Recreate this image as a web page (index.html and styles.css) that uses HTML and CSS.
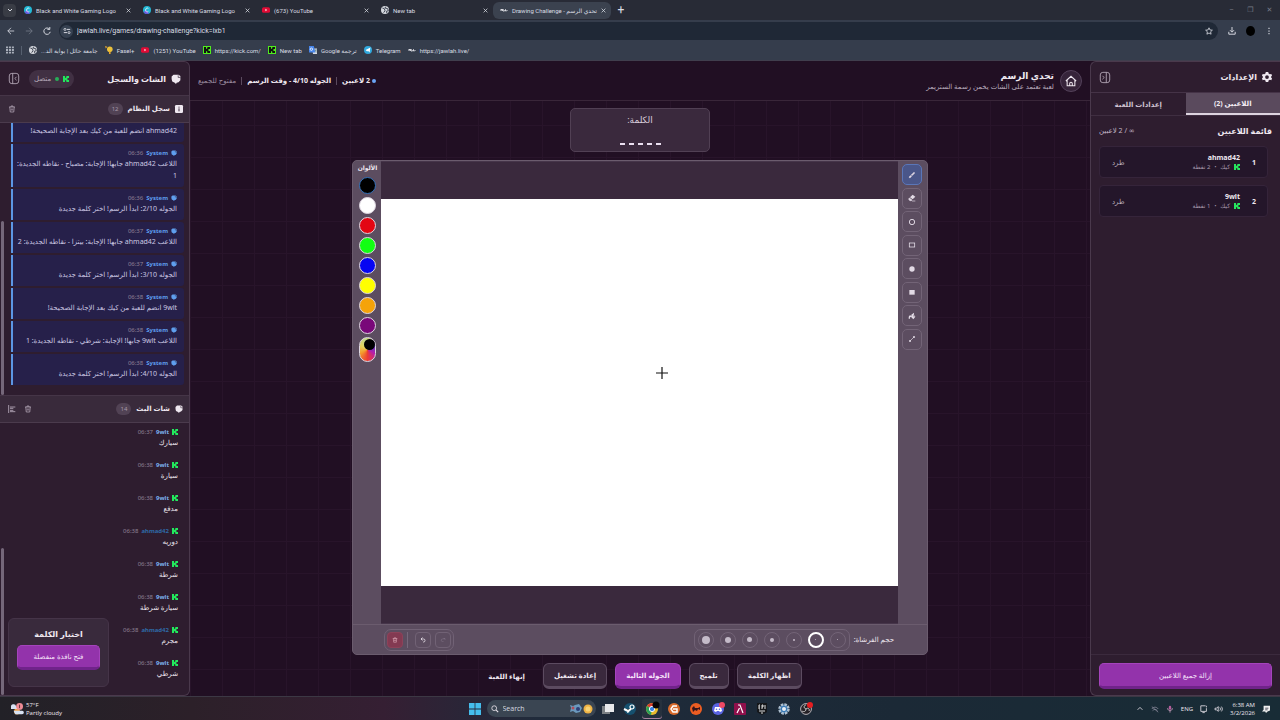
FILE: index.html
```html
<!DOCTYPE html>
<html lang="ar">
<head>
<meta charset="utf-8">
<title>تحدي الرسم - Drawing Challenge</title>
<link rel="stylesheet" href="styles.css">
</head>
<body>
<svg class="defs" aria-hidden="true">
  <symbol id="kick" viewBox="0 0 9 9"><g fill="currentColor"><rect width="3" height="9"/><rect x="2" y="3" width="3" height="3"/><rect x="4" y="2" width="3" height="2"/><rect x="4" y="5" width="3" height="2"/><rect x="5" width="4" height="3"/><rect x="5" y="6" width="4" height="3"/><rect x="4" y="3" width="2" height="3"/></g></symbol>
  <symbol id="chat" viewBox="0 0 16 16"><path fill="currentColor" d="M4 1h8l3 2v7l-3 3-3 1-1 2-2-2-4-2-1-4V4z"/><path d="M11.500 2v3.500H15" fill="none" stroke="#2c1c2e"/></symbol>
  <symbol id="trash" viewBox="0 0 16 16"><path d="M2 4h12M6 4V2h4v2M3.500 4l1 10h7l1-10M6.500 7v4M9.500 7v4" fill="none" stroke="currentColor" stroke-width="1.500"/></symbol>
  <symbol id="close" viewBox="0 0 8 8"><path d="M1 1l6 6M7 1L1 7" stroke="currentColor" stroke-width="1.200"/></symbol>
  <symbol id="panel" viewBox="0 0 14 14"><rect x="1.500" y="1" width="11" height="12" rx="3" fill="none" stroke="currentColor"/><path d="M8.500 1v12M4 5l2 2-2 2" fill="none" stroke="currentColor"/></symbol>
  <symbol id="globe" viewBox="0 0 12 12"><circle cx="6" cy="6" r="6" fill="#d5d8de"/><path d="M2 3l3 1 1 3-2 3M7 1l-1 2 4 1 1 3-3 1 1 3" fill="none" stroke="#353b49" stroke-width="1.400"/></symbol>
  <symbol id="canva" viewBox="0 0 12 12"><circle cx="6" cy="6" r="6" fill="#22b8d5"/><path d="M1 9a6 6 0 0 0 8 2L5 6z" fill="#6953dd"/><path d="M8 4C7 2 4 3 4 6s2 4 4 2" fill="none" stroke="#fff" stroke-width="1.200"/></symbol>
  <symbol id="yt" viewBox="0 0 14 12"><rect y="1" width="14" height="10" rx="3" fill="#e00b35"/><path d="M6 4l3 2-3 2z" fill="#fff"/></symbol>
  <symbol id="jawlah" viewBox="0 0 16 8"><path d="M0 4h2l2-2v4l2-4v4h3l2-3v3h2l2-2" fill="none" stroke="#e5e5eb" stroke-width="1.800"/></symbol>
</svg>

<div class="desktop">
  <header class="browser">
    <div class="tabs">
      <button class="tablist" aria-label="Search tabs"><svg viewBox="0 0 8 8"><path d="M2 3l2 2 2-2" fill="none" stroke="currentColor"/></svg></button>
      <div class="tab"><svg><use href="#canva"/></svg><span>Black and White Gaming Logo</span><button aria-label="Close"><svg><use href="#close"/></svg></button></div>
      <div class="tab"><svg><use href="#canva"/></svg><span>Black and White Gaming Logo</span><button aria-label="Close"><svg><use href="#close"/></svg></button></div>
      <div class="tab"><svg><use href="#yt"/></svg><span>(673) YouTube</span><button aria-label="Close"><svg><use href="#close"/></svg></button></div>
      <div class="tab"><svg><use href="#globe"/></svg><span>New tab</span><button aria-label="Close"><svg><use href="#close"/></svg></button></div>
      <div class="tab current"><svg><use href="#jawlah"/></svg><span dir="rtl">تحدي الرسم - Drawing Challenge</span><button aria-label="Close"><svg><use href="#close"/></svg></button></div>
      <button class="newtab" aria-label="New tab">+</button>
      <div class="winbtns"><button aria-label="Minimize">–</button><button aria-label="Restore">❐</button><button aria-label="Close window">✕</button></div>
    </div>
    <div class="toolbar">
      <button aria-label="Back"><svg viewBox="0 0 10 10"><path d="M9 5H1M5 1L1 5l4 4" fill="none" stroke="currentColor"/></svg></button>
      <button class="dim" aria-label="Forward"><svg viewBox="0 0 10 10"><path d="M1 5h8M5 1l4 4-4 4" fill="none" stroke="currentColor"/></svg></button>
      <button aria-label="Reload"><svg viewBox="0 0 10 10"><path d="M8 2.500A4 4 0 1 0 9 6M8.500 0v3h-3" fill="none" stroke="currentColor" stroke-width="1.200"/></svg></button>
      <div class="omnibox">
        <span class="site"><svg viewBox="0 0 10 10"><path d="M5 3h4M1 7h4" stroke="currentColor" stroke-width="1.200"/><circle cx="2.500" cy="3" r="1.300" fill="none" stroke="currentColor"/><circle cx="7.500" cy="7" r="1.300" fill="none" stroke="currentColor"/></svg></span>
        <input type="text" aria-label="Address" value="jawlah.live/games/drawing-challenge?kick=lxb1">
        <svg viewBox="0 0 10 10"><path d="M5 1l1.200 2.700 3 .3-2.200 2 .6 3L5 7.500 2.400 9 3 6 .8 4l3-.3z" fill="none" stroke="currentColor"/></svg>
      </div>
      <button aria-label="Downloads"><svg viewBox="0 0 10 10"><path d="M5 0v6M2.500 4L5 6.500 7.500 4M1 6v3h8V6" fill="none" stroke="currentColor" stroke-width="1.200"/></svg></button>
      <span class="avatar"></span>
      <button aria-label="Menu"><svg viewBox="0 0 10 10"><path d="M5 1v1.500M5 4.300v1.500M5 7.500V9" stroke="currentColor" stroke-width="1.400"/></svg></button>
    </div>
    <nav class="bookmarks">
      <svg class="apps" viewBox="0 0 9 9"><path d="M0 1.500h9M0 4.500h9M0 7.500h9" stroke="currentColor" stroke-width="2" stroke-dasharray="2.300 1"/></svg>
      <i></i>
      <a href="#"><svg><use href="#globe"/></svg><span dir="rtl">جامعة حائل | بوابة الد...</span></a>
      <a href="#"><svg viewBox="0 0 10 10"><circle cx="6" cy="4" r="3.500" fill="#ecc23b"/><path d="M5 7h2v3H5zM0 0l3 1-2 2z" fill="#e2a42e"/></svg>Fasel+</a>
      <a href="#"><svg><use href="#yt"/></svg>(1251) YouTube</a>
      <a href="#"><svg class="kicktile"><use href="#kick"/></svg>https://kick.com/</a>
      <a href="#"><svg class="kicktile"><use href="#kick"/></svg>New tab</a>
      <a href="#"><svg viewBox="0 0 10 10"><path d="M4 3h6v7H5z" fill="#d4d8e1"/><path d="M0 0h6l2 8H0z" fill="#4785e9"/><circle cx="3" cy="4" r="1.500" fill="none" stroke="#fff"/><path d="M7 5h3M8 5l1 3" stroke="#688"/></svg><span dir="rtl">ترجمة Google</span></a>
      <a href="#"><svg viewBox="0 0 10 10"><circle cx="5" cy="5" r="5" fill="#31a9de"/><path d="M2 5l6-3-1 6-2-2-1 1z" fill="#fff"/></svg>Telegram</a>
      <a href="#"><svg><use href="#jawlah"/></svg>https://jawlah.live/</a>
    </nav>
  </header>

  <div class="app" dir="rtl">
    <aside class="panel settings">
      <div class="panel-head">
        <svg viewBox="0 0 16 16"><path fill="currentColor" fill-rule="evenodd" d="M6 0h4l.5 2.500 2 1L15 3l1 3-2 2 2 2-1 3-2.500-.5-2 1L10 16H6l-.5-2.500-2-1L1 13l-1-3 2-2-2-2 1-3 2.500.5 2-1zM8 5a3 3 0 1 0 0 6 3 3 0 0 0 0-6z"/></svg>
        <h2>الإعدادات</h2>
        <button class="collapse" aria-label="طي الإعدادات"><svg><use href="#panel"/></svg></button>
      </div>
      <div class="switch"><button class="on">اللاعبين (2)</button><button>إعدادات اللعبة</button></div>
      <div class="players">
        <div class="players-head"><h3>قائمة اللاعبين</h3><span>∞ / 2 لاعبين</span></div>
        <div class="player"><b class="rank">1</b><div class="who"><b>ahmad42</b><small><svg><use href="#kick"/></svg>كيك<em>•</em>2 نقطة</small></div><button>طرد</button></div>
        <div class="player"><b class="rank">2</b><div class="who"><b>9wlt</b><small><svg><use href="#kick"/></svg>كيك<em>•</em>1 نقطة</small></div><button>طرد</button></div>
      </div>
      <div class="panel-foot"><button class="primary">إزالة جميع اللاعبين</button></div>
    </aside>

    <main class="game">
      <header class="game-head">
        <button class="home" aria-label="الرئيسية"><svg viewBox="0 0 14 14"><path d="M1 7l6-5.500L13 7M2.500 6v6.500h9V6M5.500 12.500V10a1.500 1.500 0 0 1 3 0v2.500" fill="none" stroke="currentColor" stroke-width="1.200"/></svg></button>
        <div class="title"><h1>تحدي الرسم</h1><p>لعبة تعتمد على الشات يخمن رسمة الستريمر</p></div>
        <div class="status"><b class="count">2 لاعبين</b><b>الجوله 4/10 - وقت الرسم</b><span>مفتوح للجميع</span></div>
      </header>
      <div class="stage">
        <div class="word"><span>الكلمة:</span><div class="blanks"><i></i><i></i><i></i><i></i><i></i></div></div>
        <section class="board">
          <div class="work">
            <div class="tools">
              <button class="on" aria-label="فرشاة"><svg viewBox="0 0 12 12"><path d="M5 6l4-4 1 1-4 4zM2 10c0-2 1-3 2-3l1 1c0 1-1 2-3 2z" fill="currentColor" stroke="currentColor"/></svg></button>
              <button aria-label="ممحاة"><svg viewBox="0 0 12 12"><path d="M7 1l4 3-4 4-4-3z" fill="currentColor"/><path d="M2 6l4 3-1 1H3L1 8zM6 10.500h5" fill="currentColor" stroke="currentColor"/></svg></button>
              <button aria-label="دائرة"><svg viewBox="0 0 12 12"><circle cx="6" cy="6" r="4" fill="none" stroke="currentColor" stroke-width="1.400"/></svg></button>
              <button aria-label="مستطيل"><svg viewBox="0 0 12 12"><rect x="2" y="3" width="8" height="6" fill="none" stroke="currentColor" stroke-width="1.200"/></svg></button>
              <button aria-label="دائرة ممتلئة"><svg viewBox="0 0 12 12"><circle cx="6" cy="6" r="4" fill="currentColor"/></svg></button>
              <button aria-label="مستطيل ممتلئ"><svg viewBox="0 0 12 12"><rect x="2" y="3" width="8" height="7" fill="currentColor"/></svg></button>
              <button aria-label="تعبئة"><svg viewBox="0 0 12 12"><path d="M5 4l4-3v3l2 3-3 4-3-3zM4 5C1 5 1 7 1 10h2c0-2 0-3 2-3" fill="currentColor"/><path d="M9 4v3" stroke="#5a4a5e"/></svg></button>
              <button aria-label="خط"><svg viewBox="0 0 12 12"><path d="M3 9l6-6" stroke="currentColor"/><circle cx="3" cy="9" r="1.500" fill="currentColor"/><circle cx="9" cy="3" r="1.500" fill="currentColor"/></svg></button>
            </div>
            <div class="canvas-area"><div class="canvas"><svg class="cursor" viewBox="0 0 12 12"><path d="M6 0v12M0 6h12" stroke="#111" stroke-width="1.200"/></svg></div></div>
            <div class="palette">
              <span>الألوان</span>
              <button class="c-black on" aria-label="أسود"></button><button class="c-white" aria-label="أبيض"></button><button class="c-red" aria-label="أحمر"></button><button class="c-green" aria-label="أخضر"></button><button class="c-blue" aria-label="أزرق"></button><button class="c-yellow" aria-label="أصفر"></button><button class="c-orange" aria-label="برتقالي"></button><button class="c-purple" aria-label="بنفسجي"></button>
              <button class="picker" aria-label="لون مخصص"><i></i></button>
            </div>
          </div>
          <div class="bar">
            <span>حجم الفرشاة:</span>
            <div class="group sizes">
              <button aria-label="1"><i class="s1"></i></button><button class="on" aria-label="2"><i class="s1"></i></button><button aria-label="3"><i class="s2"></i></button><button aria-label="4"><i class="s3"></i></button><button aria-label="5"><i class="s4"></i></button><button aria-label="6"><i class="s5"></i></button><button aria-label="7"><i class="s6"></i></button>
            </div>
            <div class="group history">
              <button class="off" aria-label="إعادة"><svg viewBox="0 0 12 12"><path d="M7 3h3v3M10 3L5 4a2.500 2.500 0 0 0 0 5h2" fill="none" stroke="currentColor"/></svg></button>
              <button aria-label="تراجع"><svg viewBox="0 0 12 12"><path d="M5 1L2 4l3 3M2 4h5a3 3 0 0 1 0 6H6" fill="none" stroke="currentColor" stroke-width="1.500"/></svg></button>
              <i class="sep"></i>
              <button class="clear" aria-label="مسح"><svg><use href="#trash"/></svg></button>
            </div>
          </div>
        </section>
        <div class="actions"><button>اظهار الكلمة</button><button>تلميح</button><button class="primary">الجوله التالية</button><button>إعادة تشغيل</button><button class="plain">إنهاء اللعبة</button></div>
      </div>
    </main>

    <aside class="panel chat">
      <div class="panel-head">
        <svg><use href="#chat"/></svg><h2>الشات والسجل</h2>
        <span class="live"><svg><use href="#kick"/></svg><i></i>متصل</span>
        <button class="collapse flip" aria-label="طي الشات"><svg><use href="#panel"/></svg></button>
      </div>
      <div class="sub-head"><svg viewBox="0 0 12 12"><rect width="12" height="12" rx="2" fill="currentColor"/><path d="M6 2.500v1.500M6 5v4.500" stroke="#3a2a3c" stroke-width="1.500"/></svg><h3>سجل النظام</h3><span class="num">12</span><button aria-label="مسح السجل"><svg><use href="#trash"/></svg></button></div>
      <div class="feed log">
        <article><header><svg><use href="#chat"/></svg><b>System</b><time>06:36</time></header><p>ahmad42 انضم للعبة من كيك بعد الإجابة الصحيحة!</p></article>
        <article><header><svg><use href="#chat"/></svg><b>System</b><time>06:36</time></header><p>اللاعب ahmad42 جابها! الإجابة: مصباح - نقاطه الجديدة: 1</p></article>
        <article><header><svg><use href="#chat"/></svg><b>System</b><time>06:36</time></header><p>الجوله 2/10: ابدأ الرسم! اختر كلمة جديدة</p></article>
        <article><header><svg><use href="#chat"/></svg><b>System</b><time>06:37</time></header><p>اللاعب ahmad42 جابها! الإجابة: بيتزا - نقاطه الجديدة: 2</p></article>
        <article><header><svg><use href="#chat"/></svg><b>System</b><time>06:37</time></header><p>الجوله 3/10: ابدأ الرسم! اختر كلمة جديدة</p></article>
        <article><header><svg><use href="#chat"/></svg><b>System</b><time>06:38</time></header><p>9wlt انضم للعبة من كيك بعد الإجابة الصحيحة!</p></article>
        <article><header><svg><use href="#chat"/></svg><b>System</b><time>06:38</time></header><p>اللاعب 9wlt جابها! الإجابة: شرطي - نقاطه الجديدة: 1</p></article>
        <article><header><svg><use href="#chat"/></svg><b>System</b><time>06:38</time></header><p>الجوله 4/10: ابدأ الرسم! اختر كلمة جديدة</p></article>
        <span class="thumb"></span>
      </div>
      <div class="sub-head"><svg><use href="#chat"/></svg><h3>شات البث</h3><span class="num">14</span><button aria-label="مسح الشات"><svg><use href="#trash"/></svg></button><button aria-label="محاذاة"><svg viewBox="0 0 12 12"><path d="M1 0v12M3 3h8M3 8h5M3 5h5M3 10h8" stroke="currentColor" stroke-width="1.300"/></svg></button></div>
      <div class="feed stream">
        <article><header><svg><use href="#kick"/></svg><b>9wlt</b><time>06:37</time></header><p>سيارك</p></article>
        <article><header><svg><use href="#kick"/></svg><b>9wlt</b><time>06:38</time></header><p>سيارة</p></article>
        <article><header><svg><use href="#kick"/></svg><b>9wlt</b><time>06:38</time></header><p>مدفع</p></article>
        <article><header><svg><use href="#kick"/></svg><b class="deep">ahmad42</b><time>06:38</time></header><p>دوريه</p></article>
        <article><header><svg><use href="#kick"/></svg><b>9wlt</b><time>06:38</time></header><p>شرطة</p></article>
        <article><header><svg><use href="#kick"/></svg><b>9wlt</b><time>06:38</time></header><p>سيارة شرطة</p></article>
        <article><header><svg><use href="#kick"/></svg><b class="deep">ahmad42</b><time>06:38</time></header><p>مجرم</p></article>
        <article><header><svg><use href="#kick"/></svg><b>9wlt</b><time>06:38</time></header><p>شرطي</p></article>
        <span class="thumb"></span>
        <div class="choose"><h3>اختيار الكلمة</h3><button class="primary">فتح نافذة منفصلة</button></div>
      </div>
    </aside>
  </div>

  <footer class="taskbar">
    <div class="weather"><svg viewBox="0 0 16 14"><circle cx="8" cy="10" r="3.500" fill="#efa14c"/><path d="M1 5a3 3 0 0 1 6-1h1v3H1zM4 9h10a2 2 0 0 1 0 4H6z" fill="#d7e2f3"/><circle cx="11" cy="4" r="4" fill="#ef8b96"/><path d="M11 2v4" stroke="#4b2430"/></svg><div>57°F<br>Partly cloudy</div></div>
    <div class="dock">
      <svg viewBox="0 0 12 12"><path d="M0 0h5.600v5.600H0zM6.400 0H12v5.600H6.400zM0 6.400h5.600V12H0zM6.400 6.400H12V12H6.400z" fill="#45bdec"/></svg>
      <div class="search"><svg viewBox="0 0 10 10"><circle cx="4" cy="4" r="3" fill="none" stroke="currentColor"/><path d="M6.500 6.500L9 9" stroke="currentColor" stroke-width="1.300"/></svg><input type="text" aria-label="Search" placeholder="Search"><svg class="fish" viewBox="0 0 22 10"><path d="M0 1l3 1 2-1 4-1 3 4-2 4-4 1-3-2-3 1 1-4z" fill="#6b99bd"/><circle cx="3" cy="4" r="1.500" fill="#b34d59"/><circle cx="8" cy="5" r="2" fill="#2c3f78"/><circle cx="18" cy="5" r="4.500" fill="#eeb345"/><circle cx="18" cy="5" r="2.500" fill="#f9d474"/></svg></div>
      <svg viewBox="0 0 12 12"><path d="M0 3h8v8H0z" fill="#7b8084"/><path d="M3 1h9v8H3z" fill="#e8e9eb"/></svg>
      <svg viewBox="0 0 12 12"><circle cx="6" cy="6" r="6" fill="#15506f"/><circle cx="8" cy="4" r="2" fill="none" stroke="#fff" stroke-width="1.200"/><path d="M0 6l4 2 3-2M5 8L3 9" stroke="#fff" stroke-width="2"/></svg>
      <span class="active"><svg viewBox="0 0 12 12"><circle cx="6" cy="6" r="6" fill="#eabb2d"/><path d="M6 6L1 3a6 6 0 0 1 10 0z" fill="#d83a31"/><path d="M6 6L1 3a6 6 0 0 0 4 9z" fill="#2a9f58"/><circle cx="6" cy="6" r="2.600" fill="#3581e5" stroke="#fff"/><circle cx="10" cy="2" r="3.500" fill="#050507"/></svg></span>
      <svg viewBox="0 0 12 12"><circle cx="6" cy="6" r="6" fill="#d86a2b"/><path d="M9 3H5L3 6l2 3h4V6H5" fill="none" stroke="#fff" stroke-width="1.500"/></svg>
      <svg viewBox="0 0 12 12"><circle cx="6" cy="6" r="6" fill="#ec5d22"/><path d="M2 5l2-2 1 2h3l2-1v3l-2-1-1 2-2-1-2 2z" fill="#35141a"/></svg>
      <svg viewBox="0 0 12 12"><circle cx="6" cy="6" r="6" fill="#5964e2"/><path d="M3 4h6l1 4-2 1-1-1H5L4 9 2 8z" fill="#fff"/><circle cx="4.500" cy="6.300" r=".8" fill="#5964e2"/><circle cx="7.500" cy="6.300" r=".8" fill="#5964e2"/><circle cx="10" cy="2" r="3" fill="#ee4964"/></svg>
      <svg viewBox="0 0 12 12"><rect width="12" height="12" rx="1" fill="#8f104b"/><path d="M4 2h2l3 8M5.500 5L3 10" fill="none" stroke="#fff" stroke-width="1.200"/></svg>
      <svg viewBox="0 0 12 12"><path d="M1 0h10v9l-5 3-5-3z" fill="#15171a"/><path d="M3 2v4M3 2h1M3 4h1M3 6h1M6 2v4M6 2h1v2H6M9 2v4M3 8h6M5 10h2" stroke="#ddd" fill="none"/></svg>
      <svg viewBox="0 0 12 12"><circle cx="6" cy="6" r="4.500" fill="#3778b4" stroke="#aebfce" stroke-width="2.500" stroke-dasharray="2.500 1"/><circle cx="6" cy="6" r="2" fill="#e8eef4"/></svg>
      <svg viewBox="0 0 12 12"><circle cx="6" cy="6" r="5.400" fill="#252126" stroke="#b8b3b8"/><path d="M6 6c-3-1-2-4 0-4M6 6c2-2 4 0 3 2M6 6c0 3-3 3-4 2" fill="none" stroke="#ccc"/><circle cx="10" cy="2" r="3" fill="#e51d20"/></svg>
    </div>
    <div class="tray">
      <svg viewBox="0 0 10 10"><path d="M2 6l3-3 3 3" fill="none" stroke="currentColor"/></svg>
      <svg viewBox="0 0 10 10"><path d="M1 2l8 7M1 5c2-3 6-3 8 0M2 7c2-2 4-2 6 0" fill="none" stroke="#889"/></svg>
      <svg viewBox="0 0 10 10"><rect x="3.500" y="1" width="3" height="5" rx="1.500" fill="#b65d9d"/><path d="M2 4c0 4 6 4 6 0M5 7v2.500" fill="none" stroke="#cda1c0"/></svg>
      <span>ENG</span>
      <svg viewBox="0 0 10 10"><path d="M7 1H1v7h7V4M3 9.500h3M8 1v2" fill="none" stroke="currentColor"/></svg>
      <svg viewBox="0 0 10 10"><path d="M0 4h2l2-2v6L2 6H0zM6 3c1 1 1 3 0 4M8 2c1.500 2 1.500 4 0 6" fill="none" stroke="currentColor"/></svg>
      <div class="clock">6:38 AM<br>3/2/2026</div>
      <svg viewBox="0 0 10 10"><path d="M2 1h8v6L7 8l-2 2-1-2H0l2-2z" fill="#eee"/><path d="M4 4h4M4 6h3" stroke="#334"/></svg>
    </div>
  </footer>
</div>
</body>
</html>
```
FILE: styles.css
```css
* { box-sizing: border-box; }
body, h1, h2, h3, p { margin: 0; }
body { font-family: "Noto Sans", "DejaVu Sans", sans-serif; font-size: 7px; color: #efe8f0; background: #210f23; }
button, input { font: inherit; color: inherit; border: 0; padding: 0; background: none; outline: 0; }
button { display: flex; align-items: center; justify-content: center; flex: none; }
svg { display: block; flex: none; width: 8px; height: 8px; overflow: visible; }
svg.defs { position: absolute; width: 0; height: 0; }
i { font-style: normal; }

.desktop { min-height: 100vh; height: 100vh; display: flex; flex-direction: column; }

/* browser chrome */
.browser { flex: none; background: #353d4c; border-bottom: 1px solid #403e4d; color: #dadde4; font-family: Roboto, "DejaVu Sans", sans-serif; }
.tabs { display: flex; align-items: center; height: 20px; background: #282b36; padding-left: 3px; }
.tablist { width: 13px; height: 13px; border-radius: 4px; background: #393c45; margin-right: 1px; }
.tab { display: flex; align-items: center; gap: 4px; width: 119px; height: 17px; padding: 0 5px 0 7px; font-size: 6px; }
.tab > svg { width: 8px; height: 8px; }
.tab span { flex: 1; white-space: nowrap; }
.tab button svg { width: 5px; height: 5px; }
.tab.current { background: #3b424f; border-radius: 6px; width: 118px; }
.newtab { font-size: 12px; width: 16px; margin-left: 2px; }
.winbtns { margin-left: auto; display: flex; gap: 12px; padding-right: 7px; color: #777b86; }
.winbtns button { width: 7px; }
.toolbar { display: flex; align-items: center; gap: 10px; height: 22px; padding: 2px 7px; }
.toolbar .dim { color: #747b88; }
.omnibox { flex: 1; display: flex; align-items: center; gap: 4px; height: 18px; border-radius: 9px; background: #1f2836; padding: 0 5px 0 1px; }
.toolbar > button + .omnibox { margin-left: -2px; }
.omnibox input { flex: 1; }
.site { display: grid; place-items: center; width: 13px; height: 13px; border-radius: 50%; background: #364151; }
.avatar { width: 9px; height: 10px; border-radius: 50%; background: #000; }
.bookmarks { display: flex; align-items: center; gap: 7px; height: 18px; padding: 0 6px 2px; font-size: 6px; }
.bookmarks i { width: 1px; height: 9px; background: #56606f; }
.bookmarks a { display: flex; align-items: center; gap: 4px; color: inherit; text-decoration: none; }
.bookmarks .apps { color: #a9afba; }
.kicktile { background: #4fed1d; color: #111; padding: 1px; }

/* app frame */
.app { flex: 1; min-height: 0; display: grid; grid-template-columns: 190px minmax(0, 1fr) 190px; }
.panel { display: flex; flex-direction: column; min-height: 0; background: #2e1d2f; border: 1px solid #4a394c; overflow: hidden; }
.settings { border-radius: 6px 0 0 6px; border-right: 0; }
.chat { border-radius: 0 6px 6px 0; border-left: 0; }
.panel-head { display: flex; align-items: center; gap: 5px; flex: none; height: 30px; padding: 0 8px; }
.panel-head > svg { width: 10px; height: 10px; }
.chat .panel-head { height: 33px; }
h2, h3 { font-size: 8px; line-height: 14px; white-space: nowrap; }
.collapse { margin-right: auto; color: #b9acbb; }
.collapse svg { width: 12px; height: 13px; }
.flip svg { transform: scaleX(-1); }
.primary { background: #9333ab; border: 1px solid #a544bc; border-bottom: 3px solid #70238a; border-radius: 5px; color: #f6e4fa; }

/* settings panel */
.switch { display: flex; flex: none; height: 24px; border-top: 1px solid #453347; border-bottom: 1px solid #3f2e41; }
.switch button { flex: 1; color: #cfc3d1; font-weight: 700; }
.switch .on { background: #5a4a5d; border-bottom: 2px solid #ddd4df; color: #f3edf4; }
.players { flex: 1; padding: 7px 8px; }
.players-head { display: flex; align-items: center; justify-content: space-between; height: 15px; margin-bottom: 8px; }
.players-head span { color: #c3b7c6; }
.player { display: flex; align-items: center; height: 32px; margin: 0 4px 7px 0; padding: 0 11px 0 12px; border: 1px solid #35243a; border-radius: 4px; background: #24162a; }
.rank { width: 16px; }
.who { flex: 1; display: flex; flex-direction: column; align-items: flex-start; }
.who b { line-height: 10px; }
.who small { display: flex; align-items: center; gap: 4px; font-size: 6px; line-height: 9px; color: #a798ab; }
.who small svg { width: 6px; height: 6px; color: #27e45e; }
.who em { font-style: normal; font-size: 5px; }
.player button { color: #bcb0bf; }
.panel-foot { flex: none; padding: 8px 8px 6px; border-top: 1px solid #3b2a3d; }
.panel-foot .primary { width: 100%; height: 26px; }

/* game header */
.game { display: flex; flex-direction: column; min-width: 0; background: #210f23; background-image: linear-gradient(#28142a 1px, transparent 1px), linear-gradient(90deg, #28142a 1px, transparent 1px); background-size: 32px 32px; }
.game-head { display: flex; align-items: center; flex: none; height: 40px; padding: 0 8px; border-bottom: 1px solid #392639; background: #210f23; }
.home { width: 22px; height: 22px; border-radius: 50%; border: 1px solid #53415a; background: #36243a; margin-left: 6px; }
.home svg { width: 12px; height: 12px; }
.title { flex: 1; }
h1 { font-size: 9px; line-height: 13px; }
.title p { color: #b9acbd; line-height: 10px; }
.status { display: flex; align-items: center; line-height: 8px; white-space: nowrap; }
.status > * + * { border-right: 1px solid #5b4a5f; margin-right: 5px; padding-right: 5px; }
.status span { color: #9c8da1; }
.count::before { content: ""; display: inline-block; width: 4px; height: 4px; border-radius: 50%; background: #6aa5f5; margin-left: 2px; }

/* stage */
.stage { flex: 1; min-height: 0; display: flex; flex-direction: column; align-items: center; gap: 8px; padding: 7px 0; }
.word { flex: none; display: flex; flex-direction: column; align-items: center; justify-content: space-between; width: 140px; height: 44px; padding: 4px 0 6px; border: 1px solid #514054; border-radius: 5px; background: #3a293d; font-size: 9px; line-height: 14px; color: #d9cddb; }
.blanks { display: flex; gap: 4px; }
.blanks i { width: 5px; height: 2px; background: #eadff0; }
.board { flex: 1; min-height: 0; width: 64%; display: flex; flex-direction: column; border: 1px solid #6b5c6e; border-radius: 5px; background: #5c4d60; overflow: hidden; }
.work { flex: 1; min-height: 0; display: flex; }
.tools { width: 29px; height: 189px; display: flex; flex-direction: column; align-items: center; justify-content: space-between; padding: 3px 1px 0 0; }
.tools button { width: 20px; height: 21px; border: 1px solid #736477; border-radius: 5px; color: #e2dae5; }
.tools .on { background: #4a5689; border-color: #5a76b8; }
.canvas-area { flex: 1; display: flex; align-items: center; border: 1px solid #46354a; border-width: 1px 0; background: #3a293d; }
.canvas { width: 100%; aspect-ratio: 4 / 3; background: #fff; position: relative; }
.cursor { position: absolute; left: 53.200%; top: 43.500%; width: 12px; height: 12px; }
.palette { width: 28px; display: flex; flex-direction: column; align-items: center; gap: 3px; padding: 2px 0 0 1px; }
.palette span { font-weight: 700; font-size: 6px; line-height: 11px; }
.palette button { width: 17px; height: 17px; border: 1px solid #ded6e1; border-radius: 50%; position: relative; }
.palette .on { border-color: #3371b8; }
.c-black { background: #000; } .c-white { background: #fff; } .c-red { background: #e30613; } .c-green { background: #12ff12; }
.c-blue { background: #0505f2; } .c-yellow { background: #ff0; } .c-orange { background: #f5a30a; } .c-purple { background: #790879; }
.palette .picker { height: 25px; border-radius: 9px; background: conic-gradient(#d0dc75, #5b3fc6, #b61dab, #ec3d33, #f49b2b, #e5d45c, #b8d992); }
.picker i { position: absolute; top: 1px; right: 0; width: 11px; height: 11px; border-radius: 50%; background: #000; }
.bar { flex: none; display: flex; align-items: center; height: 30px; padding: 0 33px 0 31px; border-top: 1px solid #6b5c6e; white-space: nowrap; }
.bar > span { margin-left: 4px; }
.group { display: flex; align-items: center; height: 22px; border: 1px solid #716275; border-radius: 7px; padding: 0 3px; }
.sizes { gap: 6px; }
.sizes button { width: 16px; height: 16px; border: 1px solid #736477; border-radius: 50%; }
.sizes .on { border: 2px solid #fff; }
.sizes i { border-radius: 50%; background: #c4bac8; }
.s1 { width: 1px; height: 1px; } .s2 { width: 2px; height: 2px; } .s3 { width: 4px; height: 4px; } .s4 { width: 5px; height: 5px; } .s5 { width: 6px; height: 6px; } .s6 { width: 8px; height: 8px; }
.history { margin-right: auto; gap: 4px; padding: 0 2px; }
.history button { width: 16px; height: 16px; border: 1px solid #716275; border-radius: 4px; }
.history svg { width: 6px; height: 6px; }
.history .off { color: #85778a; }
.history .clear { background: #833a52; border-color: #8d4259; color: #e2aebd; }
.sep { width: 1px; height: 16px; margin-right: 3px; background: #77687b; }
.actions { flex: none; display: flex; gap: 8px; height: 26px; }
.actions button { padding: 0 10px; border-radius: 6px; white-space: nowrap; }
.actions button:not(.primary):not(.plain) { background: #3a293d; border: 1px solid #5c4b60; border-bottom: 3px solid #5c4b60; }
.actions .primary, .actions button { font-weight: 700; }

/* chat panel */
.live { display: flex; align-items: center; gap: 4px; height: 18px; padding: 0 5px; border-radius: 9px; background: #413043; margin-right: 28px; color: #b6a9b8; }
.live svg { width: 6px; height: 6px; color: #21e65c; }
.live i { width: 4px; height: 4px; border-radius: 50%; background: #27ae58; }
.sub-head { display: flex; align-items: center; gap: 5px; flex: none; height: 28px; padding: 0 6px 0 8px; background: #392a3b; border-top: 1px solid #453547; border-bottom: 1px solid #4b3b4d; }
.sub-head h3 { font-size: 7px; }
.sub-head .num { padding: 0 4px; border-radius: 6px; background: #514254; color: #a799aa; font-size: 6px; line-height: 12px; }
.sub-head button { color: #b5a8b8; }
.num + button { margin-right: auto; }
.sub-head button + button { margin-right: 3px; }
.feed { position: relative; display: flex; flex-direction: column; justify-content: flex-end; overflow: hidden; }
.feed article { flex: none; }
.feed header { display: flex; align-items: center; gap: 3px; font-size: 6px; line-height: 10px; }
.feed header svg { width: 6px; height: 6px; }
.feed b { color: #7db1ef; }
.feed .deep { color: #2e6ba8; }
.feed time { color: #918396; }
.feed p { line-height: 12px; }
.log { flex: 0 0 272px; gap: 2px; padding: 0 5px 10px 11px; }
.log article { padding: 4px 7px 5px 3px; background: #26204a; border-left: 2px solid #5c96e4; border-radius: 0 3px 3px 0; }
.log header, .log header b { color: #5f9fee; }
.log p { color: #cbc7e2; }
.stream { flex: 1; gap: 3px; padding: 0 11px 11px; }
.stream article { padding: 4px 0; }
.stream header svg { color: #22e95d; }
.thumb { position: absolute; left: 1px; width: 3px; border-radius: 2px; background: #75677a; }
.log .thumb { top: 36%; bottom: 0; }
.stream .thumb { top: 46%; bottom: 0; }
.choose { position: absolute; left: 8px; bottom: 8px; display: flex; flex-direction: column; align-items: center; width: 101px; height: 69px; padding: 8px; border: 1px solid #453448; border-radius: 6px; background: #392a3c; }
.choose .primary { width: 100%; height: 25px; margin-top: 4px; }

/* taskbar */
.taskbar { flex: none; display: grid; grid-template-columns: 1fr auto 1fr; align-items: center; height: 24px; padding: 0 10px; border-top: 1px solid #3c3844; background: linear-gradient(90deg, #222127, #2c2029 15%, #351f33 30%, #202b3b 42%, #1b2936 70%, #182c36); font-family: "Open Sans", sans-serif; font-size: 6px; line-height: 8px; }
.weather { display: flex; align-items: center; gap: 2px; }
.weather svg { width: 14px; height: 12px; }
.dock { display: flex; align-items: center; gap: 10px; }
.dock > svg, .active svg { width: 12px; height: 12px; }
.search { display: flex; align-items: center; gap: 4px; width: 109px; height: 17px; margin: 0 -4px; padding: 0 4px; border-radius: 9px; background: #3a4552; }
.search input { flex: 1; width: 0; font-size: 7px; }
.search input::placeholder { color: #d8dce2; opacity: 1; }
.search .fish { width: 22px; height: 10px; }
.active { margin: 0 -4px; padding: 4px; border-radius: 3px; background: #26313e; box-shadow: inset 0 -1px #a9829f; }
.tray { display: flex; align-items: center; justify-content: flex-end; gap: 7px; }
.clock { text-align: right; }
```
